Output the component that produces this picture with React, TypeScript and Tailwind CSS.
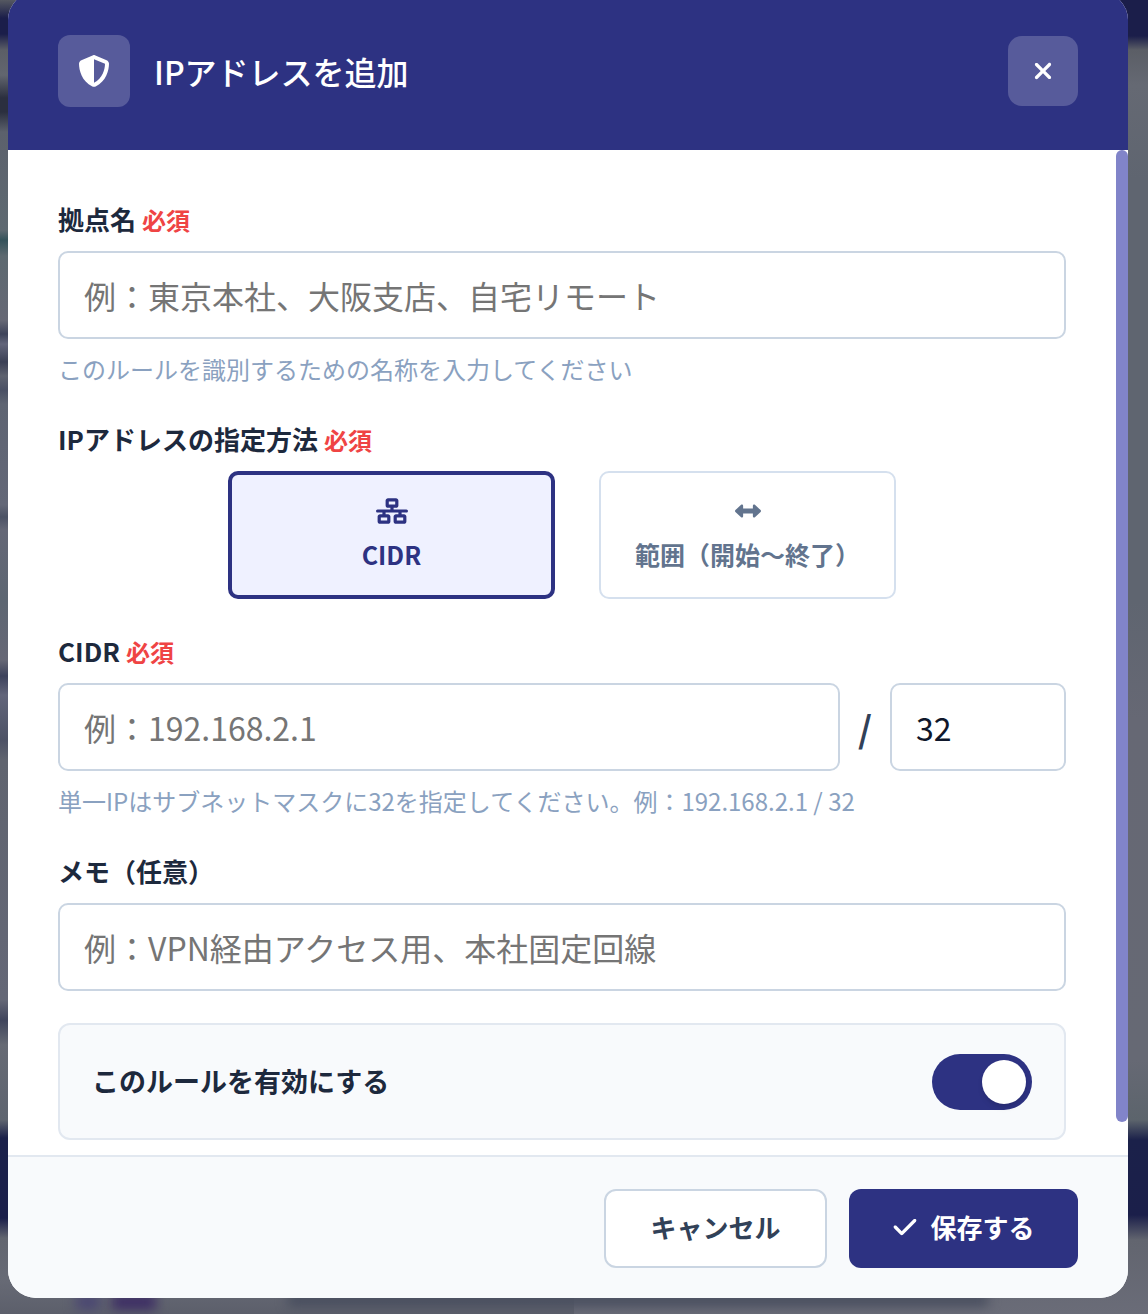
import { useState, type ReactNode } from "react";
import { FaCheck, FaLeftRight, FaNetworkWired, FaShieldHalved, FaXmark } from "react-icons/fa6";

type Method = "cidr" | "range";

const inputClass =
  "h-[88px] rounded-[10px] border-2 border-slate-300 bg-white px-6 text-[32px] text-slate-900 placeholder:text-[#757575] focus:outline-none";

function Required() {
  return <span className="ml-[6px] text-2xl leading-none text-[#ef4444]">必須</span>;
}

function Help({ children }: { children: ReactNode }) {
  return <p className="mt-3 text-2xl leading-9 text-[#8aa1c0]">{children}</p>;
}

// Blurred page behind the dialog
function Backdrop() {
  return (
    <div className="absolute inset-0 flex overflow-hidden bg-[#5f646f]" aria-hidden="true">
      <div className="flex-1 bg-[linear-gradient(180deg,#555861_0px,#1b1e4a_18px,#1b1e4a_34px,#5b5e66_50px,#62666f_75px,#2b2f3f_98px,#2b2f3f_112px,#5c616c_132px,#5e6971_230px,#34525a_240px,#5d6970_256px,#666875_320px,#3e435a_334px,#62657a_344px,#3b4055_362px,#5e626f_376px,#4a5064_390px,#5e6472_404px,#636777_505px,#4c5265_517px,#646776_530px,#5d6672_600px,#666775_660px,#3d425c_676px,#62657a_695px,#4d5265_740px,#60646f_760px,#646776_1000px,#40455c_1020px,#666a74_1045px,#5e646f_1120px,#1b214a_1138px,#1b1f4a_1218px,#62656f_1238px,#676a75_1280px,#5c5f6b_1314px)]" />
      <div className="flex-1 bg-[linear-gradient(180deg,#1b1e4a_0px,#1b1e4a_36px,#5b5e66_50px,#656973_85px,#5f6570_180px,#5f6570_600px,#666874_720px,#666974_1060px,#5c646c_1120px,#1b214a_1140px,#1b1f4a_1215px,#62656f_1240px,#6a6c78_1314px)]" />
      <div className="absolute bottom-1 left-28 h-4 w-11 bg-[#3c2c64] blur-[6px]" />
      <div className="absolute bottom-1 left-[76px] h-4 w-6 bg-[#4a4672] blur-[6px]" />
      <div className="absolute bottom-2 left-72 h-3 w-[700px] bg-[#454b5c] blur-[6px]" />
    </div>
  );
}

export default function App() {
  const [method, setMethod] = useState<Method>("cidr");
  const [enabled, setEnabled] = useState(true);

  const optionClass = (active: boolean) =>
    active
      ? "w-[327px] border-4 border-[#2d3282] bg-[#eff1ff] text-[#2d3282]"
      : "w-[297px] border-2 border-[#d5e0ee] bg-white text-slate-500";

  return (
    <div className="relative flex min-h-screen overflow-hidden px-2 pb-4 font-['Noto_Sans_CJK_JP',sans-serif]">
      <Backdrop />
      <form
        role="dialog"
        aria-labelledby="dialog-title"
        onSubmit={(e) => e.preventDefault()}
        className="relative -mt-2 mr-3 flex flex-1 flex-col overflow-hidden rounded-[28px] bg-white"
      >
        {/* Header */}
        <header className="flex items-center gap-6 bg-[#2d3282] px-[50px] py-[43px] text-white">
          <div className="flex size-[72px] items-center justify-center rounded-[12px] bg-white/20">
            <FaShieldHalved className="size-8" />
          </div>
          <h2 id="dialog-title" className="flex-1 text-[32px] font-medium leading-10">
            IPアドレスを追加
          </h2>
          <button
            type="button"
            aria-label="閉じる"
            className="flex size-[70px] items-center justify-center rounded-[14px] bg-white/20"
          >
            <FaXmark className="size-[26px]" />
          </button>
        </header>

        {/* Body, with the scroll thumb in its own column */}
        <div className="flex flex-1">
          <div className="flex flex-1 flex-col gap-8 px-[50px] pt-[49px] pb-[15px]">
            <div className="flex flex-col">
              <label htmlFor="site" className="mb-3 text-[26px] font-bold leading-10 text-slate-800">
                拠点名
                <Required />
              </label>
              <input id="site" className={inputClass} placeholder="例：東京本社、大阪支店、自宅リモート" />
              <Help>このルールを識別するための名称を入力してください</Help>
            </div>

            <div role="group" aria-labelledby="method-label">
              <p id="method-label" className="mb-3 text-[26px] font-bold leading-10 text-slate-800">
                IPアドレスの指定方法
                <Required />
              </p>
              <div className="flex justify-center gap-11">
                <button
                  type="button"
                  aria-pressed={method === "cidr"}
                  onClick={() => setMethod("cidr")}
                  className={`flex h-32 flex-col items-center justify-center gap-3 rounded-[10px] text-[25px] font-bold leading-9 ${optionClass(method === "cidr")}`}
                >
                  <FaNetworkWired className="h-[26px] w-8" />
                  CIDR
                </button>
                <button
                  type="button"
                  aria-pressed={method === "range"}
                  onClick={() => setMethod("range")}
                  className={`flex h-32 flex-col items-center justify-center gap-3 rounded-[10px] text-[25px] font-bold leading-9 ${optionClass(method === "range")}`}
                >
                  <FaLeftRight className="size-[26px]" />
                  範囲（開始〜終了）
                </button>
              </div>
            </div>

            <div className="flex flex-col">
              <label htmlFor="cidr" className="mb-3 text-[26px] font-bold leading-10 text-slate-800">
                CIDR
                <Required />
              </label>
              <div className="flex items-center gap-[18px]">
                <input id="cidr" className={`${inputClass} min-w-0 flex-1`} placeholder="例：192.168.2.1" />
                <span className="text-[36px] font-bold leading-10 text-slate-700">/</span>
                <input aria-label="サブネットマスク" className={`${inputClass} w-44`} defaultValue="32" />
              </div>
              <Help>単一IPはサブネットマスクに32を指定してください。例：192.168.2.1 / 32</Help>
            </div>

            <div className="flex flex-col">
              <label htmlFor="memo" className="mb-3 text-[26px] font-bold leading-10 text-slate-800">
                メモ（任意）
              </label>
              <input id="memo" className={inputClass} placeholder="例：VPN経由アクセス用、本社固定回線" />
            </div>

            <label className="flex h-[117px] items-center justify-between rounded-[12px] border-2 border-slate-200 bg-slate-50 px-8 text-[27px] font-bold text-slate-800">
              このルールを有効にする
              <input
                type="checkbox"
                role="switch"
                checked={enabled}
                onChange={(e) => setEnabled(e.target.checked)}
                className="flex h-14 w-[100px] appearance-none items-center rounded-full bg-slate-300 px-[6px] before:size-11 before:rounded-full before:bg-white before:shadow-md checked:justify-end checked:bg-[#2d3282]"
              />
            </label>
          </div>
          <div className="mb-[33px] w-3 rounded-full bg-[#8184c9]" />
        </div>

        {/* Footer */}
        <footer className="flex justify-end gap-[22px] border-t-2 border-slate-200 bg-slate-50 px-[50px] pt-8 pb-[30px] text-[26px] font-bold">
          <button
            type="button"
            className="h-[79px] w-[223px] rounded-[12px] border-2 border-slate-300 bg-white pb-1 text-slate-700"
          >
            キャンセル
          </button>
          <button
            type="submit"
            className="flex h-[79px] w-[229px] items-center justify-center gap-3 rounded-[12px] bg-[#2d3282] pb-1 text-white"
          >
            <FaCheck className="size-[26px]" />
            保存する
          </button>
        </footer>
      </form>
    </div>
  );
}
